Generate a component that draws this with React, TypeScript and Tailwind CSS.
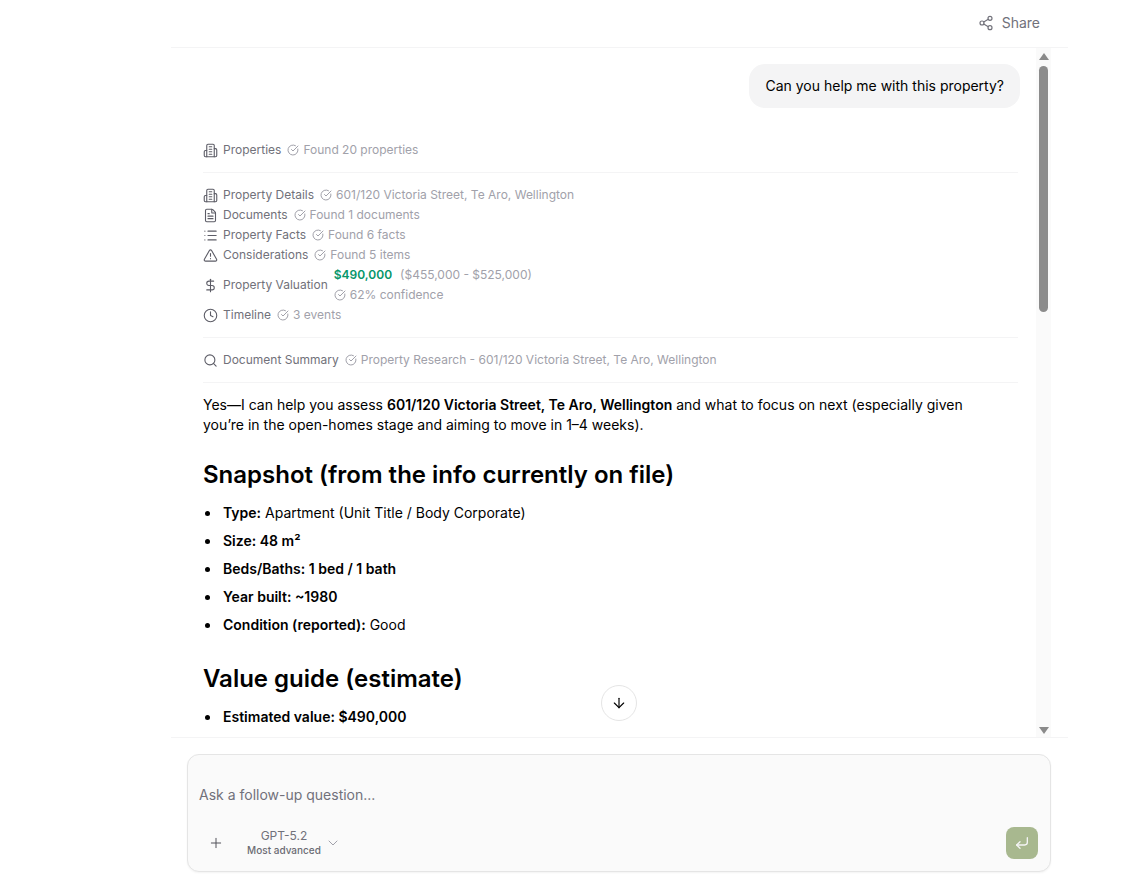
import { ArrowDown, ChevronDown, CircleCheckBig, Clock, CornerDownLeft, DollarSign, FileText, List, Plus, Search, Share2, TriangleAlert } from "lucide-react"
import type { ReactNode } from "react"

function Done({ children }: { children: ReactNode }) {
  return (
    <span className="flex items-center gap-1 text-[#a1a1aa]">
      <CircleCheckBig className="h-3 w-3" strokeWidth={2} />
      {children}
    </span>
  )
}

function ToolRow({ icon, label, children }: { icon: ReactNode; label: string; children: ReactNode }) {
  return (
    <div className="flex h-5 items-center gap-1.5">
      <span className="flex w-[14px] justify-center text-[#5c5c66]">{icon}</span>
      <span className="text-[#71717a]">{label}</span>
      <Done>{children}</Done>
    </div>
  )
}

const iconClass = "h-[15px] w-[15px] shrink-0"

function BuildingIcon() {
  return (
    <svg className={iconClass} viewBox="0 0 24 24" fill="none" stroke="currentColor" strokeWidth={1.75} strokeLinecap="round" strokeLinejoin="round">
      <path d="M6 22V4a2 2 0 0 1 2-2h8a2 2 0 0 1 2 2v18Z" />
      <path d="M6 12H4a2 2 0 0 0-2 2v6a2 2 0 0 0 2 2h2" />
      <path d="M18 9h2a2 2 0 0 1 2 2v9a2 2 0 0 1-2 2h-2" />
      <path d="M10 6h4" />
      <path d="M10 10h4" />
      <path d="M10 14h4" />
      <path d="M10 18h4" />
    </svg>
  )
}

function Bullet({ children }: { children: ReactNode }) {
  return (
    <li className="flex items-center py-1">
      <span className="mr-[13px] ml-[2px] h-[5px] w-[5px] shrink-0 rounded-full bg-black" />
      <span>{children}</span>
    </li>
  )
}

function ScrollBar() {
  return (
    <div className="flex w-[15px] shrink-0 flex-col items-center bg-[#fafafa]">
      <div className="mt-[5px] h-0 w-0 border-x-[5px] border-b-[7px] border-x-transparent border-b-[#8a8a8a]" />
      <div className="mt-[6px] h-[246px] w-[9px] rounded-full bg-[#8c8c8c]" />
      <div className="mt-auto mb-[3px] h-0 w-0 border-x-[5px] border-t-[7px] border-x-transparent border-t-[#8a8a8a]" />
    </div>
  )
}

export default function App() {
  return (
    <div className="h-[887px] w-[1134px] overflow-hidden bg-white pl-[171px] font-['Inter',sans-serif] text-black">
      <div className="flex h-full w-[897px] flex-col">
        <header className="flex h-[48px] shrink-0 items-center justify-end border-b border-[#f4f4f5] pr-[28px] pb-[2px]">
          <button className="flex items-center gap-2 text-sm text-[#71717a]">
            <Share2 className="h-4 w-4" strokeWidth={1.75} />
            Share
          </button>
        </header>

        <div className="relative flex h-[689px] shrink-0 overflow-hidden pr-[17px]">
          <main className="min-w-0 flex-1 overflow-hidden pl-8 pr-[18px]">
            <div className="-mr-[2px] flex justify-end pt-4">
              <div className="rounded-2xl bg-[#f4f4f5] px-4 py-3 text-sm leading-5">Can you help me with this property?</div>
            </div>

            <div className="mt-[32px] text-xs">
              <div className="border-b border-[#f4f4f5] pb-3">
                <ToolRow icon={<BuildingIcon />} label="Properties">Found 20 properties</ToolRow>
              </div>
              <div className="border-b border-[#f4f4f5] py-3">
                <ToolRow icon={<BuildingIcon />} label="Property Details">601/120 Victoria Street, Te Aro, Wellington</ToolRow>
                <ToolRow icon={<FileText className={iconClass} strokeWidth={1.75} />} label="Documents">Found 1 documents</ToolRow>
                <ToolRow icon={<List className={iconClass} strokeWidth={1.75} />} label="Property Facts">Found 6 facts</ToolRow>
                <ToolRow icon={<TriangleAlert className={iconClass} strokeWidth={1.75} />} label="Considerations">Found 5 items</ToolRow>
                <div className="flex items-center gap-1.5">
                  <span className="flex w-[14px] justify-center text-[#5c5c66]">
                    <DollarSign className={iconClass} strokeWidth={1.75} />
                  </span>
                  <span className="text-[#71717a]">Property Valuation</span>
                  <div>
                    <div className="flex h-5 items-center gap-2">
                      <span className="font-semibold text-[#059669]">$490,000</span>
                      <span className="text-[#a1a1aa]">($455,000 - $525,000)</span>
                    </div>
                    <div className="flex h-5 items-center">
                      <Done>62% confidence</Done>
                    </div>
                  </div>
                </div>
                <ToolRow icon={<Clock className={iconClass} strokeWidth={1.75} />} label="Timeline">3 events</ToolRow>
              </div>
              <div className="border-b border-[#f4f4f5] py-3">
                <ToolRow icon={<Search className={iconClass} strokeWidth={1.75} />} label="Document Summary">Property Research - 601/120 Victoria Street, Te Aro, Wellington</ToolRow>
              </div>
            </div>

            <article className="pr-[40px] text-sm leading-5">
              <p className="mt-3">
                Yes—I can help you assess <strong className="font-semibold">601/120 Victoria Street, Te Aro, Wellington</strong> and what to focus on next (especially given you’re in the open-homes stage and aiming to move in 1–4 weeks).
              </p>
              <h2 className="mt-6 text-2xl leading-8 font-semibold">Snapshot (from the info currently on file)</h2>
              <ul className="mt-2">
                <Bullet><strong className="font-semibold">Type:</strong> Apartment (Unit Title / Body Corporate)</Bullet>
                <Bullet><strong className="font-semibold">Size: 48 m²</strong></Bullet>
                <Bullet><strong className="font-semibold">Beds/Baths: 1 bed / 1 bath</strong></Bullet>
                <Bullet><strong className="font-semibold">Year built: ~1980</strong></Bullet>
                <Bullet><strong className="font-semibold">Condition (reported):</strong> Good</Bullet>
              </ul>
              <h2 className="mt-6 text-2xl leading-8 font-semibold">Value guide (estimate)</h2>
              <ul className="mt-2">
                <Bullet><strong className="font-semibold">Estimated value: $490,000</strong></Bullet>
              </ul>
            </article>
          </main>
          <ScrollBar />
          <button className="absolute top-[637px] left-[430px] flex h-9 w-9 items-center justify-center rounded-full border border-[#e5e5e5] bg-white">
            <ArrowDown className="h-4 w-4" strokeWidth={1.75} />
          </button>
        </div>

        <div className="border-t border-[#f4f4f5] px-4 pt-4">
          <div className="h-[118px] w-[864px] rounded-xl border border-[#e5e5e5] bg-[#fafafa] pr-3 pl-[11px] shadow-xs">
            <div className="pt-[30px] text-sm leading-5 text-[#71717a]">Ask a follow-up question...</div>
            <div className="mt-[22px] flex items-center">
              <Plus className="ml-[9px] h-4 w-4 text-[#52525b]" strokeWidth={1.5} />
              <div className="ml-[22px] w-[76px] text-center text-[#6b6b73]">
                <div className="text-xs leading-[14px] text-[#71717a]">GPT-5.2</div>
                <div className="text-[10px] leading-[15px] font-medium">Most advanced</div>
              </div>
              <ChevronDown className="ml-[3px] h-4 w-4 text-[#a1a1aa]" strokeWidth={1.5} />
              <button className="ml-auto flex h-8 w-8 items-center justify-center rounded-lg bg-[#a8b88f] text-[#f4f4f5]">
                <CornerDownLeft className="h-4 w-4" strokeWidth={2} />
              </button>
            </div>
          </div>
        </div>
      </div>
    </div>
  )
}
